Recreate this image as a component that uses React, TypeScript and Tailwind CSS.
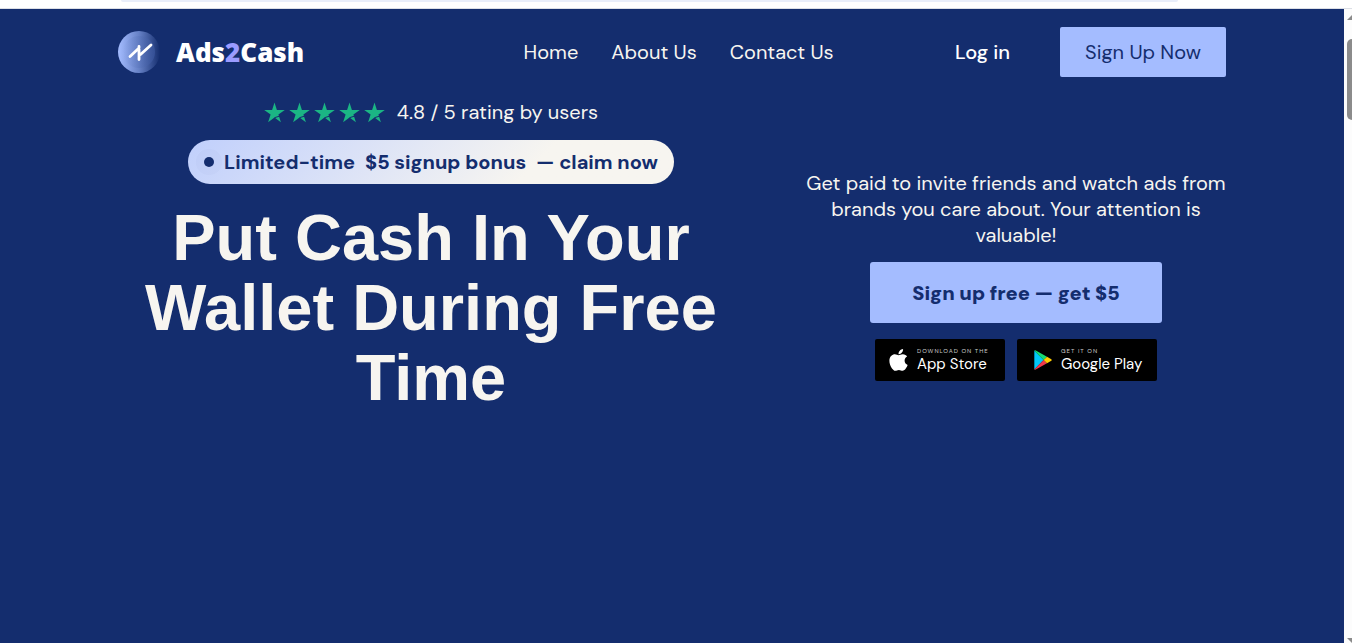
import React from "react";

const navLinks = ["Home", "About Us", "Contact Us"];

function LogoMark() {
  return (
    <svg viewBox="0 0 42 42" className="size-[42px]" aria-hidden="true">
      <defs>
        <linearGradient id="disc" x1="0" y1="0" x2="1" y2="0">
          <stop offset="0" stopColor="#a4bcff" />
          <stop offset="0.5" stopColor="#6681c6" />
          <stop offset="1" stopColor="#142d6e" />
        </linearGradient>
        <linearGradient id="core" x1="0" y1="0" x2="1" y2="0">
          <stop offset="0" stopColor="#6f8ad0" stopOpacity="0" />
          <stop offset="1" stopColor="#3a569e" stopOpacity="0.7" />
        </linearGradient>
      </defs>
      <circle cx="21" cy="21" r="21" fill="url(#disc)" />
      <circle cx="21" cy="21" r="16" fill="url(#core)" />
      <path
        d="M12 25.500 L21 17 M21 15.500 V28.500 M22.500 23.500 L33 14"
        fill="none"
        stroke="#fff"
        strokeWidth="2.800"
        strokeLinecap="round"
        strokeLinejoin="round"
      />
    </svg>
  );
}

function Star() {
  return (
    <svg viewBox="0 0 21 21" className="size-[21px]" aria-hidden="true">
      <path
        d="M10.500 0.500 L12.900 8 H20.800 L14.400 12.500 L16.900 20.200 L10.500 15.500 L4.100 20.200 L6.600 12.500 L0.200 8 H8.100 Z"
        fill="#1bb584"
      />
      <path d="M10.500 15.700 L15 14.300" stroke="#142d6e" strokeWidth="1" />
    </svg>
  );
}

function AppleIcon() {
  return (
    <svg
      viewBox="0 30 384 454"
      className="h-[22px] w-[19px]"
      fill="#fff"
      aria-hidden="true"
    >
      <path d="M318.700 268.700c-.2-36.700 16.400-64.400 50-84.800-18.800-26.900-47.200-41.700-84.700-44.600-35.500-2.800-74.300 20.700-88.500 20.700-15 0-49.400-19.700-76.400-19.700C63.300 141.200 4 184.800 4 273.500q0 39.300 14.400 81.200c12.800 36.700 59 126.700 107.200 125.200 25.200-.6 43-17.900 75.800-17.900 31.800 0 48.300 17.900 76.400 17.900 48.600-.7 90.400-82.500 102.600-119.300-65.200-30.700-61.700-90-61.700-91.900zm-56.600-164.200c27.300-32.400 24.800-61.900 24-72.500-24.100 1.400-52 16.400-67.900 34.900-17.500 19.800-27.800 44.300-25.600 71.900 26.100 2 49.900-11.400 69.500-34.300z" />
    </svg>
  );
}

function PlayIcon() {
  return (
    <svg viewBox="0 0 18 20" className="h-5 w-[18px]" aria-hidden="true">
      <path d="M0.300 0.600 V19.400 L9.600 10 Z" fill="#00c8fa" />
      <path d="M0.300 0.600 Q0.900 0 1.800 0.400 L13 6.800 L9.600 10 Z" fill="#16dc75" />
      <path d="M0.300 19.400 Q0.900 20 1.800 19.600 L13 13.200 L9.600 10 Z" fill="#f0394c" />
      <path d="M13 6.800 L17.300 9.200 Q18.100 10 17.300 10.800 L13 13.200 L9.600 10 Z" fill="#ffcd00" />
    </svg>
  );
}

function BrowserEdge() {
  return (
    <div className="h-[9px] shrink-0 border-b border-[#dcdfe6] bg-white pr-[174px] pl-[121px]">
      <div className="h-0.5 rounded-b-lg bg-[#e9eefa]" />
    </div>
  );
}

function ScrollTrack() {
  return (
    <div
      className="flex w-2 shrink-0 flex-col items-end justify-between bg-[#fcfcfc]"
      aria-hidden="true"
    >
      <div className="flex flex-col items-end gap-[19px] pt-[6px]">
        <svg viewBox="0 0 5 5" className="size-[5px]">
          <path d="M0 5 L5 0 V5 Z" fill="#8b8b8b" />
        </svg>
        <div className="h-[81px] w-[5px] rounded-l-md bg-[#8b8b8b]" />
      </div>
      <svg viewBox="0 0 5 5" className="size-[5px]">
        <path d="M0 0 H5 V5 Z" fill="#8b8b8b" />
      </svg>
    </div>
  );
}

function Header() {
  return (
    <header className="flex items-center justify-between">
      <a href="#" className="flex items-center gap-4">
        <LogoMark />
        <span className="font-['Noto_Sans',sans-serif] text-[26px] leading-8 font-black text-white">
          Ads<span className="text-[#9b9bff]">2</span>Cash
        </span>
      </a>

      <nav className="flex gap-[33px] pl-[98px]">
        {navLinks.map((label) => (
          <a key={label} href="#">
            {label}
          </a>
        ))}
      </nav>

      <div className="flex items-center gap-[50px]">
        <a href="#" className="font-medium text-white">
          Log in
        </a>
        <button className="h-[50px] w-[166px] rounded-xs bg-[#a4bcff] text-[#142d6e]">
          Sign Up Now
        </button>
      </div>
    </header>
  );
}

function Hero() {
  return (
    <section className="grid grid-cols-[1fr_420px] gap-[62px] pt-[22px]">
      <div className="flex flex-col items-center text-center">
        <div className="flex items-center gap-3">
          <div className="flex gap-1">
            {[1, 2, 3, 4, 5].map((n) => (
              <Star key={n} />
            ))}
          </div>
          <span>4.8 / 5 rating by users</span>
        </div>

        <a
          href="#"
          className="mt-[15px] flex h-11 items-center rounded-full bg-linear-135 from-[#c0cffc] to-[#f7f5f0] to-70% px-4 font-bold whitespace-nowrap text-[#142d6e]"
        >
          <span className="mr-[10px] size-[10px] rounded-full bg-[#142d6e] ring-8 ring-[#142d6e]/2" />
          Limited-time
          <strong className="mx-[10px] font-extrabold">$5 signup bonus</strong>
          — claim now
        </a>

        <h1 className="mt-[19px] font-['Liberation_Sans',Arial,sans-serif] text-[65px] leading-[70px] font-bold text-[#f7f5f0]">
          Put Cash In Your Wallet During Free Time
        </h1>
      </div>

      <div className="flex flex-col items-center pt-[71px] text-center">
        <p>
          Get paid to invite friends and watch ads from brands you care about.
          Your attention is valuable!
        </p>

        <button className="mt-[14px] h-[61px] w-[292px] rounded-[3px] bg-[#a4bcff] font-black text-[#142d6e]">
          Sign up free — get $5
        </button>

        <div className="mt-4 flex gap-3">
          <a
            href="#"
            className="flex h-[42px] w-[130px] items-center gap-[9px] rounded-xs bg-black pl-[14px] text-left text-white"
          >
            <AppleIcon />
            <span className="flex flex-col">
              <span className="text-[6px] leading-[8px] tracking-[1px] text-[#c8c8c8]">
                DOWNLOAD ON THE
              </span>
              <span className="text-[15px] leading-[18px]">App Store</span>
            </span>
          </a>
          <a
            href="#"
            className="flex h-[42px] w-[140px] items-center gap-[9px] rounded-xs bg-black pl-[17px] text-left text-white"
          >
            <PlayIcon />
            <span className="flex flex-col">
              <span className="text-[6px] leading-[8px] tracking-[1px] text-[#c8c8c8]">
                GET IT ON
              </span>
              <span className="text-[15px] leading-[18px]">Google Play</span>
            </span>
          </a>
        </div>
      </div>
    </section>
  );
}

export default function App() {
  return (
    <div className="flex min-h-screen flex-col font-['DM_Sans',Inter,sans-serif] text-[20px] leading-[26px] text-[#f7f5f0]">
      <BrowserEdge />
      <div className="flex grow">
        <main className="grow bg-[#142d6e] px-[118px] pt-[18px]">
          <Header />
          <Hero />
        </main>
        <ScrollTrack />
      </div>
    </div>
  );
}
